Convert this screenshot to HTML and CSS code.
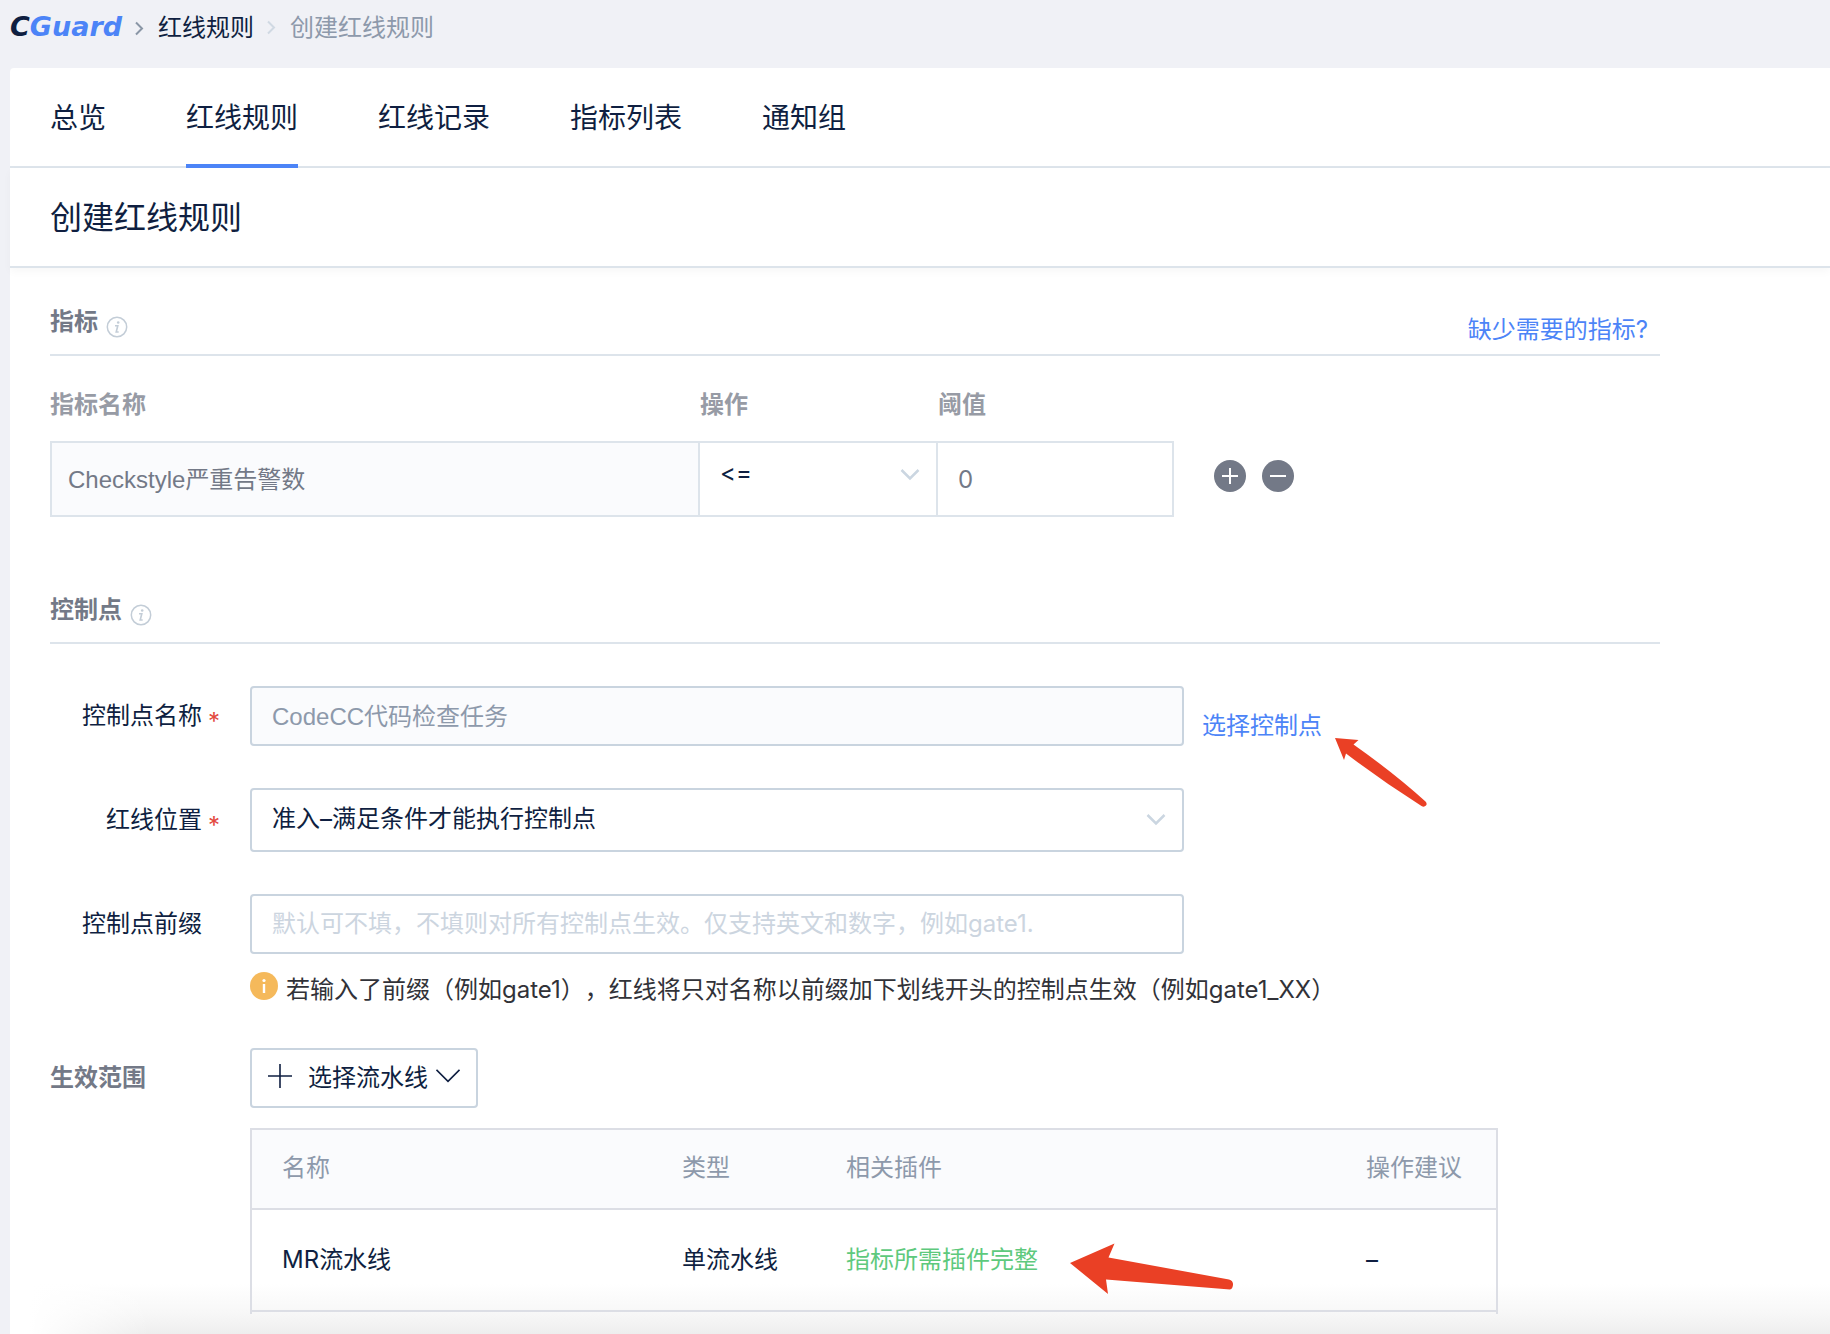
FILE: index.html
```html
<!DOCTYPE html>
<html lang="zh-CN">
<head>
<meta charset="utf-8">
<title>创建红线规则 - CGuard</title>
<link rel="stylesheet" href="styles.css">
</head>
<body>
<header class="topbar">
  <a class="logo" href="#"><span class="logo-c">C</span>Guard</a>
  <svg class="crumb-sep" width="10" height="16" viewBox="0 0 10 16"><path d="M2 2.500l6 6-6 6" fill="none" stroke="currentColor" stroke-width="2"/></svg>
  <a class="crumb" href="#">红线规则</a>
  <svg class="crumb-sep light" width="10" height="16" viewBox="0 0 10 16"><path d="M2 1.500l6 6-6 6" fill="none" stroke="currentColor" stroke-width="2"/></svg>
  <span class="crumb current">创建红线规则</span>
</header>

<main class="panel">
  <nav class="tabs">
    <a class="tab" href="#">总览</a>
    <a class="tab active" href="#">红线规则</a>
    <a class="tab" href="#">红线记录</a>
    <a class="tab" href="#">指标列表</a>
    <a class="tab" href="#">通知组</a>
  </nav>
  <h1 class="page-title">创建红线规则</h1>

  <form class="content">
    <div class="section-head">
      <h2 class="section-title">指标</h2>
      <svg class="info" width="22" height="22" viewBox="0 0 22 22"><circle cx="11" cy="11" r="9.700" fill="none" stroke="currentColor" stroke-width="1.500"/><circle cx="12.200" cy="6.500" r="1.300" fill="currentColor"/><path d="M9 9.700h2.800L10.200 16H12.700" fill="none" stroke="currentColor" stroke-width="1.600"/></svg>
      <a class="link missing" href="#">缺少需要的指标?</a>
    </div>

    <div class="metric">
      <div class="metric-grid">
        <label class="metric-label" for="metric-name">指标名称</label>
        <label class="metric-label" for="metric-op">操作</label>
        <label class="metric-label" for="metric-value">阈值</label>
        <input class="cell cell-name" id="metric-name" type="text" value="Checkstyle严重告警数" readonly>
        <div class="select-box cell-op">
          <select class="cell" id="metric-op"><option>&lt;=</option></select>
          <svg class="arrow" width="20" height="14" viewBox="0 0 20 14"><path d="M1.500 2l8.500 8.500L18.500 2" fill="none" stroke="currentColor" stroke-width="2.500"/></svg>
        </div>
        <input class="cell cell-value" id="metric-value" type="text" value="0">
      </div>
      <div class="metric-actions">
        <button class="round" type="button" aria-label="添加"><svg width="32" height="32" viewBox="0 0 32 32"><circle cx="16" cy="16" r="16" fill="currentColor"/><path d="M8 16h16M16 8v16" stroke="#fff" stroke-width="2"/></svg></button>
        <button class="round" type="button" aria-label="删除"><svg width="32" height="32" viewBox="0 0 32 32"><circle cx="16" cy="16" r="16" fill="currentColor"/><path d="M8 16h16" stroke="#fff" stroke-width="2"/></svg></button>
      </div>
    </div>

    <div class="section-head">
      <h2 class="section-title">控制点</h2>
      <svg class="info" width="22" height="22" viewBox="0 0 22 22"><circle cx="11" cy="11" r="9.700" fill="none" stroke="currentColor" stroke-width="1.500"/><circle cx="12.200" cy="6.500" r="1.300" fill="currentColor"/><path d="M9 9.700h2.800L10.200 16H12.700" fill="none" stroke="currentColor" stroke-width="1.600"/></svg>
    </div>

    <div class="fields">
      <div class="field">
        <label class="label" for="point-name">控制点名称</label>
        <span class="star">*</span>
        <input class="input filled" id="point-name" type="text" value="CodeCC代码检查任务" readonly>
        <div class="pick">
          <a class="link" href="#">选择控制点</a>
          <svg class="pointer pointer-link" width="100" height="74" viewBox="0 0 100 74"><path d="M3 3L26.500 5 21.500 9.500Q62 38 93.500 66.500Q95.500 69 94 70.500Q92 72.500 89.500 71Q50 46 14 18.500L12 25Z" fill="#ea4025"/></svg>
        </div>
      </div>
      <div class="field">
        <label class="label" for="position">红线位置</label>
        <span class="star">*</span>
        <div class="select-box wide">
          <select class="input tall" id="position"><option>准入–满足条件才能执行控制点</option></select>
          <svg class="arrow" width="20" height="14" viewBox="0 0 20 14"><path d="M1.500 2l8.500 8.500L18.500 2" fill="none" stroke="currentColor" stroke-width="2.500"/></svg>
        </div>
      </div>
      <div class="field">
        <label class="label" for="prefix">控制点前缀</label>
        <span class="star"></span>
        <input class="input" id="prefix" type="text" placeholder="默认可不填，不填则对所有控制点生效。仅支持英文和数字，例如gate1.">
      </div>
    </div>
    <p class="hint">
      <svg width="28" height="28" viewBox="0 0 28 28"><circle cx="14" cy="14" r="14" fill="#f5b95b"/><circle cx="14" cy="8.500" r="1.600" fill="#fff"/><path d="M14 12v9" stroke="#fff" stroke-width="2.400"/></svg>
      <span>若输入了前缀（例如gate1），红线将只对名称以前缀加下划线开头的控制点生效（例如gate1_XX）</span>
    </p>

    <div class="scope">
      <h2 class="section-title">生效范围</h2>
      <div class="scope-body">
        <button class="add" type="button">
          <svg class="plus" width="24" height="24" viewBox="0 0 24 24"><path d="M0 12h24M12 0v24" stroke="currentColor" stroke-width="1.600"/></svg>
          <span>选择流水线</span>
          <svg class="caret" width="24" height="14" viewBox="0 0 24 14"><path d="M.500.800L12 12.300 23.500.800" fill="none" stroke="currentColor" stroke-width="1.600"/></svg>
        </button>
        <table class="table">
          <thead>
            <tr><th class="col-name">名称</th><th class="col-type">类型</th><th class="col-plugin">相关插件</th><th>操作建议</th></tr>
          </thead>
          <tbody>
            <tr>
              <td>MR流水线</td>
              <td>单流水线</td>
              <td><span class="ok">指标所需插件完整<svg class="pointer pointer-row" width="170" height="54" viewBox="0 0 170 54"><path d="M2 22L46.500 2.500 40.500 16.500 161 38.500Q165.500 40 165 44Q164.500 48 162 48.500L38 38.500 40 53Z" fill="#ea4025"/></svg></span></td>
              <td>–</td>
            </tr>
          </tbody>
        </table>
      </div>
    </div>
  </form>
</main>
</body>
</html>
```
FILE: styles.css
```css
* {
  box-sizing: border-box;
}

body {
  margin: 0;
  min-height: 100vh;
  display: flex;
  flex-direction: column;
  background: #f0f1f6;
  color: #0f1f41;
  font: 24px/32px "Inter", "Noto Sans CJK SC", sans-serif;
  text-spacing-trim: space-all;
}

a {
  color: inherit;
  text-decoration: none;
}

h1,
h2,
p {
  margin: 0;
}

input,
select,
button {
  font: inherit;
  color: inherit;
}

.topbar {
  display: flex;
  align-items: center;
  height: 68px;
  padding: 0 10px 12px;
}

.logo {
  width: 112px;
  margin-right: 12px;
  padding-bottom: 2px;
  color: #4c84f7;
  font: italic bold 27px/32px "DejaVu Sans", sans-serif;
}

.logo-c {
  color: #0f1f41;
}

.crumb-sep {
  color: #8a96a6;
  margin-right: 14px;
}

.crumb-sep.light {
  color: #d0d9e3;
  margin: 0 14px 0 12px;
}

.crumb.current {
  color: #8d99ab;
}

.panel {
  flex: 1;
  margin-left: 10px;
  background:
    linear-gradient(to right, #fff 20px, transparent 140px),
    linear-gradient(to top, #eee, #f7f7f7 20px, #fff 50px);
  border-radius: 4px 0 0 0;
}

.tabs {
  display: flex;
  gap: 80px;
  height: 100px;
  padding: 0 40px;
  border-bottom: 2px solid #dde4eb;
  font-size: 28px;
}

.tab {
  height: 100px;
  line-height: 100px;
}

.tab.active {
  border-bottom: 4px solid #4c84f7;
}

.page-title {
  height: 100px;
  padding: 0 40px;
  border-bottom: 2px solid #dde4eb;
  box-shadow: 0 4px 8px rgba(0, 0, 0, 0.03);
  font-size: 32px;
  font-weight: 400;
  line-height: 100px;
}

.content {
  padding: 24px 170px 16px 40px;
}

.section-head {
  display: flex;
  height: 64px;
  padding-top: 14px;
  gap: 8px;
  border-bottom: 2px solid #dde4eb;
}

.section-title {
  color: #737987;
  font-size: 24px;
  font-weight: 700;
  line-height: 32px;
}

.info {
  margin-top: 10px;
  color: #c3cdd7;
}

.link {
  color: #4c84f7;
}

.missing {
  margin: 8px 12px 0 auto;
}

.metric {
  display: flex;
  align-items: flex-end;
  gap: 40px;
  margin: 33px 0 63px;
}

.metric-grid {
  display: grid;
  grid-template-columns: 650px 238px 236px;
  row-gap: 20px;
}

.metric-label {
  color: #979ba5;
  font-weight: 700;
}

.cell {
  width: 100%;
  height: 76px;
  padding: 0 20px;
  border: 2px solid #dde4eb;
  border-radius: 0;
  background: #fff;
  color: #737987;
}

.cell-name,
.filled {
  font-family: "Liberation Sans", "Noto Sans CJK SC", sans-serif;
}

.cell-name {
  padding: 0 16px 4px;
  background: #fafbfd;
}

.cell-op .cell {
  border-left: 0;
  padding-bottom: 12px;
  color: #0f1f41;
}

.cell-op .arrow {
  margin-bottom: 8px;
}

.cell-value {
  border-left: 0;
}

.metric-actions {
  display: flex;
  gap: 16px;
  padding-bottom: 25px;
}

.round {
  display: block;
  width: 32px;
  height: 32px;
  padding: 0;
  border: 0;
  background: none;
  color: #737987;
}

.round svg {
  display: block;
}

select {
  appearance: none;
}

.select-box {
  display: grid;
  align-items: center;
}

.select-box select,
.select-box .arrow {
  grid-area: 1 / 1;
}

.select-box .arrow {
  justify-self: end;
  margin-right: 18px;
  color: #cbd6e1;
  pointer-events: none;
}

.fields {
  display: flex;
  flex-direction: column;
  gap: 42px;
  padding-top: 42px;
}

.field {
  display: flex;
  align-items: center;
}

.label {
  width: 152px;
  text-align: right;
}

.star {
  width: 48px;
  padding: 12px 0 0 6px;
  color: #e34a3f;
}

.input {
  width: 934px;
  height: 60px;
  padding: 0 20px 2px;
  border: 2px solid #c9d4df;
  border-radius: 4px;
  background: #fff;
}

.input.tall {
  height: 64px;
}

.input.filled {
  padding-bottom: 4px;
  background: #fafbfd;
  color: #8d99ab;
}

.input::placeholder {
  color: #ccd5df;
  opacity: 1;
}

.pick {
  position: relative;
  margin-left: 18px;
  padding-top: 20px;
}

.pointer {
  position: absolute;
  pointer-events: none;
}

.pointer-link {
  top: 45px;
  left: 130px;
}

.hint {
  display: flex;
  gap: 8px;
  margin: 18px 0 42px;
  padding-left: 200px;
  color: #313238;
}

.hint span {
  padding-top: 2px;
}

.scope {
  display: flex;
}

.scope .section-title {
  width: 200px;
  padding-top: 14px;
}

.scope-body {
  width: 1248px;
}

.add {
  display: flex;
  align-items: center;
  height: 60px;
  margin-bottom: 20px;
  padding: 0 16px;
  border: 2px solid #c9d4df;
  border-radius: 4px;
  background: #fff;
}

.add span {
  margin: 0 8px 0 16px;
}

.plus,
.caret {
  margin-bottom: 4px;
}

.table {
  width: 100%;
  padding-bottom: 2px;
  table-layout: fixed;
  border: 2px solid #dcdee5;
  border-top: 0;
  border-bottom: 0;
  border-spacing: 0;
  text-align: left;
}

.table th {
  height: 82px;
  padding: 0 0 2px 30px;
  border: solid #dcdee5;
  border-width: 2px 0;
  background: #fafbfd;
  color: #8d99ab;
  font-weight: 400;
}

.table td {
  height: 102px;
  padding: 0 0 0 30px;
  border-bottom: 2px solid #dcdee5;
}

.col-name {
  width: 400px;
}

.col-type {
  width: 164px;
}

.col-plugin {
  width: 520px;
}

.ok {
  position: relative;
  color: #5ec97d;
}

.pointer-row {
  top: -4px;
  left: 222px;
}
```
